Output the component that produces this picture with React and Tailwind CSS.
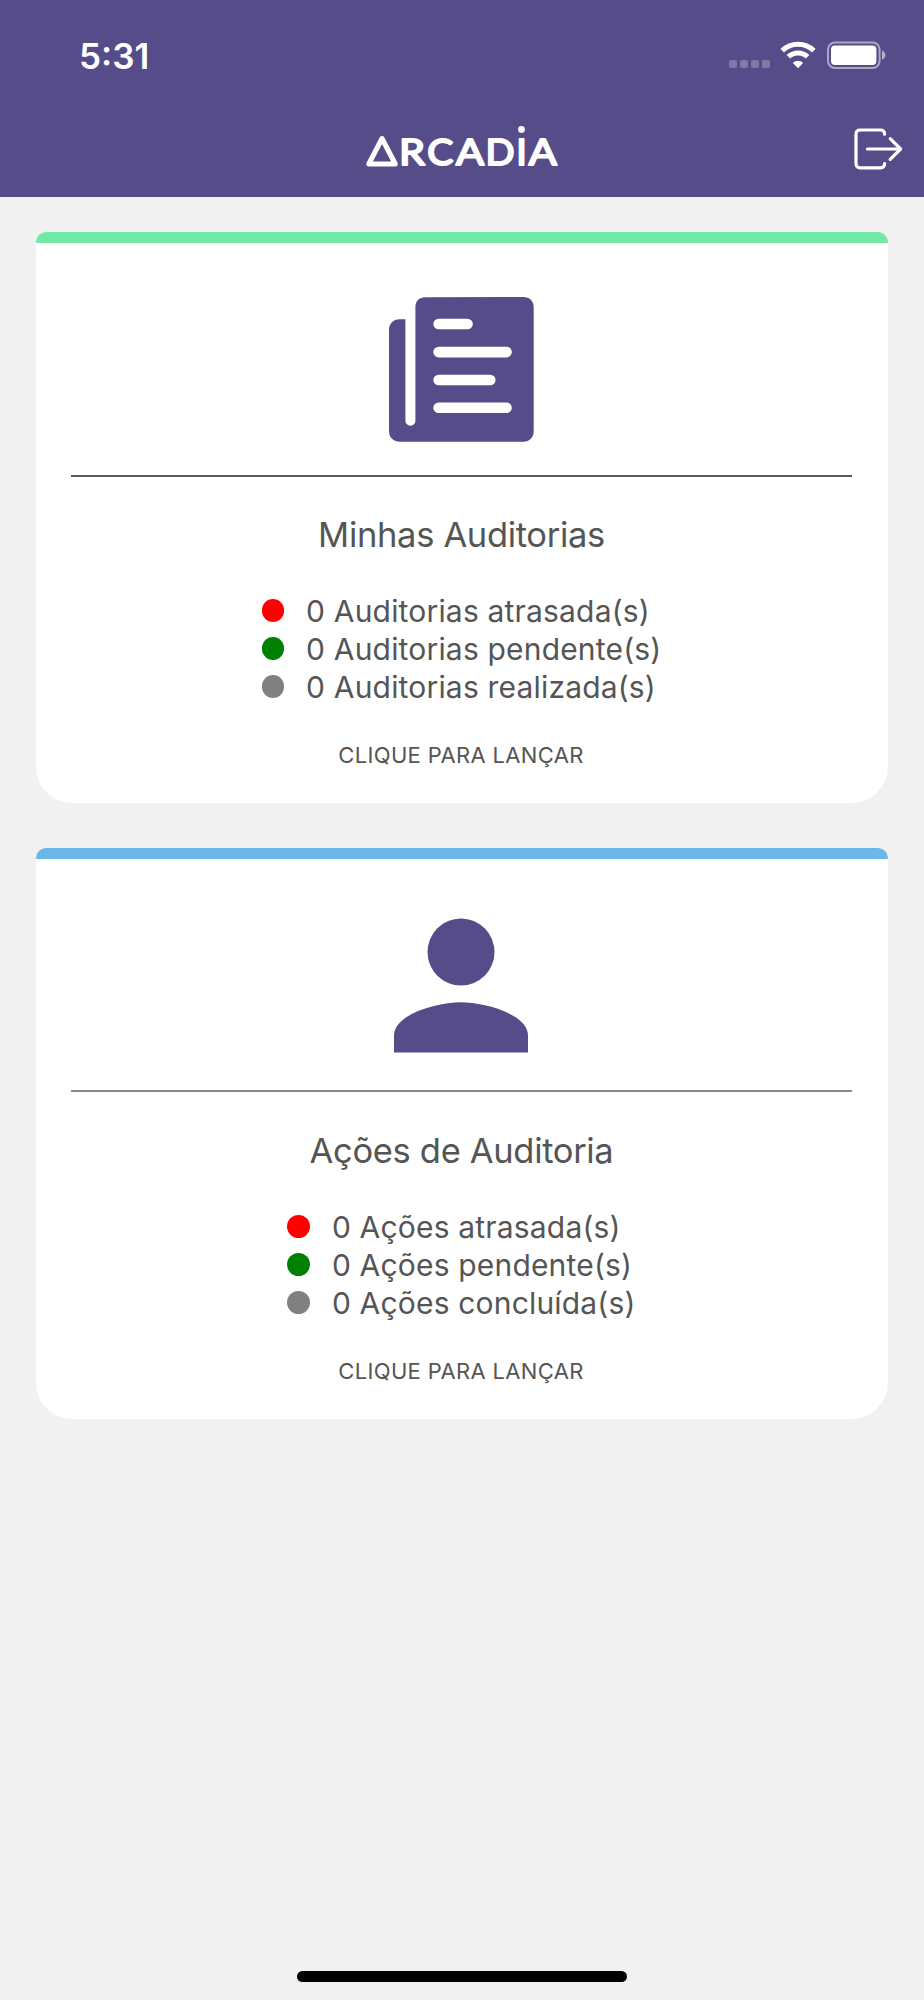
const LOGO_LETTERS = [
  { c: "R", x: 34, w: 26 },
  { c: "C", x: 62.3, w: 26 },
  { c: "A", x: 91, w: 28 },
  { c: "D", x: 120.6, w: 29 },
  { c: "I", x: 151.2, w: 10.600 },
  { c: "A", x: 163.7, w: 28 },
];

function Logo() {
  return (
    <svg width="194" height="56" viewBox="0 0 194 56" className="block">
      <path d="M17 13.500 3.800 39H30.300Z" fill="none" stroke="#fff" strokeWidth="5" strokeLinejoin="round" />
      <g
        fill="#fff"
        stroke="#fff"
        strokeWidth="2"
        strokeLinejoin="round"
        fontFamily="Lato, sans-serif"
        fontSize="37"
        fontWeight="400"
      >
        {LOGO_LETTERS.map((l, i) => (
          <text key={i} x={l.x} y="40.4" textLength={l.w} lengthAdjust="spacingAndGlyphs">
            {l.c}
          </text>
        ))}
      </g>
      <circle cx="156.5" cy="4.5" r="3.4" fill="#fff" />
    </svg>
  );
}

function WifiIcon() {
  return (
    <svg width="36" height="28" viewBox="0 0 36 28" className="block">
      <g fill="none" stroke="#fff" strokeWidth="5">
        <path d="M2.2 9.6a22.6 22.6 0 0 1 31.6 0" />
        <path d="M8.4 15.8a13.8 13.8 0 0 1 19.2 0" />
      </g>
      <path d="M18 27.2 12.8 21.9a7.4 7.4 0 0 1 10.4 0Z" fill="#fff" />
    </svg>
  );
}

function BatteryIcon() {
  return (
    <svg width="60" height="28" viewBox="0 0 60 28" className="block">
      <rect x="1" y="1.400" width="51.6" height="25.6" rx="7" fill="none" stroke="#fff" strokeOpacity=".5" strokeWidth="2" />
      <rect x="4" y="4.600" width="45.4" height="19.4" rx="4" fill="#fff" />
      <path d="M55 9.600c4.6 1.6 4.6 7.6 0 9.2Z" fill="#fff" fillOpacity=".55" />
    </svg>
  );
}

function ExitIcon() {
  return (
    <svg width="50" height="42" viewBox="0 0 50 42" className="block" fill="none" stroke="#fff" strokeWidth="3.2" strokeLinecap="round" strokeLinejoin="round">
      <path d="M30.600 6.200C30.600 3.400 29 2 26.400 2H6.200C3.400 2 2 3.400 2 6.200v29.400c0 2.800 1.400 4.200 4.200 4.200h20.200c2.600 0 4.200-1.400 4.200-4.200" />
      <path d="M13.400 21h33" />
      <path d="M36.200 10.600 46.600 21 36.200 31.400" />
    </svg>
  );
}

function NewsIcon() {
  return (
    <svg width="145" height="145" viewBox="0 0 145 145" className="block">
      <path
        fill="#564c89"
        d="M10.5 22.3H16.4V123.7a5 5 0 0 0 10 0V10C26.400 4 30.400 0.300 36.400 0.300L134.500 0C140.500 0 144.700 4 144.700 10V134.500C144.700 140.500 140.500 144.700 134.500 144.700H11C4.500 144.700 0 140.500 0 134V33C0 26.500 4.500 22.300 10.500 22.300Z"
      />
      <g fill="#fff">
        <rect x="44.300" y="21.700" width="39.500" height="10.600" rx="5.300" />
        <rect x="44.300" y="49.800" width="78.500" height="10.600" rx="5.300" />
        <rect x="44.300" y="77.700" width="62.300" height="10.600" rx="5.300" />
        <rect x="44.300" y="105.500" width="78.500" height="10.600" rx="5.300" />
      </g>
    </svg>
  );
}

function PersonIcon() {
  return (
    <svg width="134" height="135" viewBox="4 3.940 16 16.120" className="block" fill="#564c89">
      <circle cx="12" cy="8" r="4" />
      <path d="M12 14c-2.670 0-8 1.340-8 4v2h16v-2c0-2.660-5.330-4-8-4z" />
    </svg>
  );
}

const DOTS = ["bg-[#ff0000]", "bg-[#008000]", "bg-[#808080]"];

function Card({ bar, icon, iconBox, divider, title, items }) {
  return (
    <section className="flex h-[571px] flex-col overflow-hidden rounded-t-[10px] rounded-b-[36px] bg-white text-[#555]">
      <div className={`h-[11px] shrink-0 ${bar}`} />
      <div className={`flex h-[231px] shrink-0 justify-center ${iconBox}`}>{icon}</div>
      <div className="flex h-[3px] shrink-0 items-start pr-[36px] pl-[35px]">
        <div className={`w-full ${divider}`} />
      </div>
      <h2 className="mt-[36px] pr-[1px] text-center text-[34.500px] leading-[44px] font-normal tracking-[-0.33px]">{title}</h2>
      <ul className="mx-auto flex flex-col pt-[35px] pr-[1px]">
        {items.map((t, i) => (
          <li key={t} className="flex h-[38px] items-center">
            <span className={`mr-[22px] mb-[1px] size-[22.500px] rounded-full ${DOTS[i]}`} />
            <span className="text-[30px] leading-[38px] tracking-[0.18px] whitespace-nowrap">{t}</span>
          </li>
        ))}
      </ul>
      <p className="mt-[35px] pr-[2px] text-center text-[22px] leading-[28px] tracking-[0.33px]">CLIQUE PARA LANÇAR</p>
    </section>
  );
}

export default function App() {
  return (
    <div className="flex h-[2000px] w-[924px] flex-col bg-[#f1f1f1] font-['Inter',sans-serif]">
      <header className="flex h-[197px] shrink-0 flex-col bg-[#564c89] text-white">
        <div className="flex h-[112px] items-start justify-between pt-[41px] pr-[37px] pl-[79px]">
          <span className="-mt-[7px] text-[35px] leading-[44px] font-semibold">5:31</span>
          <div className="flex">
            <div className="mt-[19px] mr-[10px] flex gap-[3px]">
              <i className="size-[8px] rounded-[2px] bg-white/25" />
              <i className="size-[8px] rounded-[2px] bg-white/25" />
              <i className="size-[8px] rounded-[2px] bg-white/25" />
              <i className="size-[8px] rounded-[2px] bg-white/25" />
            </div>
            <WifiIcon />
            <div className="ml-[11px]">
              <BatteryIcon />
            </div>
          </div>
        </div>
        <div className="grid grid-cols-[1fr_194px_1fr]">
          <span />
          <div className="mt-[13px]">
            <Logo />
          </div>
          <div className="mt-[16px] mr-[20px] justify-self-end">
            <ExitIcon />
          </div>
        </div>
      </header>
      <main className="flex grow flex-col gap-[45px] px-9 pt-[35px]">
        <Card
          bar="bg-[#71e8a6]"
          icon={<NewsIcon />}
          iconBox="pt-[54px] pr-[2px]"
          divider="mt-px h-[2px] bg-[#5a5a5a]"
          title="Minhas Auditorias"
          items={["0 Auditorias atrasada(s)", "0 Auditorias pendente(s)", "0 Auditorias realizada(s)"]}
        />
        <Card
          bar="bg-[#69b8e9]"
          icon={<PersonIcon />}
          iconBox="pt-[59px] pr-[2px]"
          divider="h-[2px] bg-[#8a8a8a]"
          title="Ações de Auditoria"
          items={["0 Ações atrasada(s)", "0 Ações pendente(s)", "0 Ações concluída(s)"]}
        />
      </main>
      <div className="mb-[18px] h-[11px] w-[330px] shrink-0 self-center rounded-full bg-black" />
    </div>
  );
}
